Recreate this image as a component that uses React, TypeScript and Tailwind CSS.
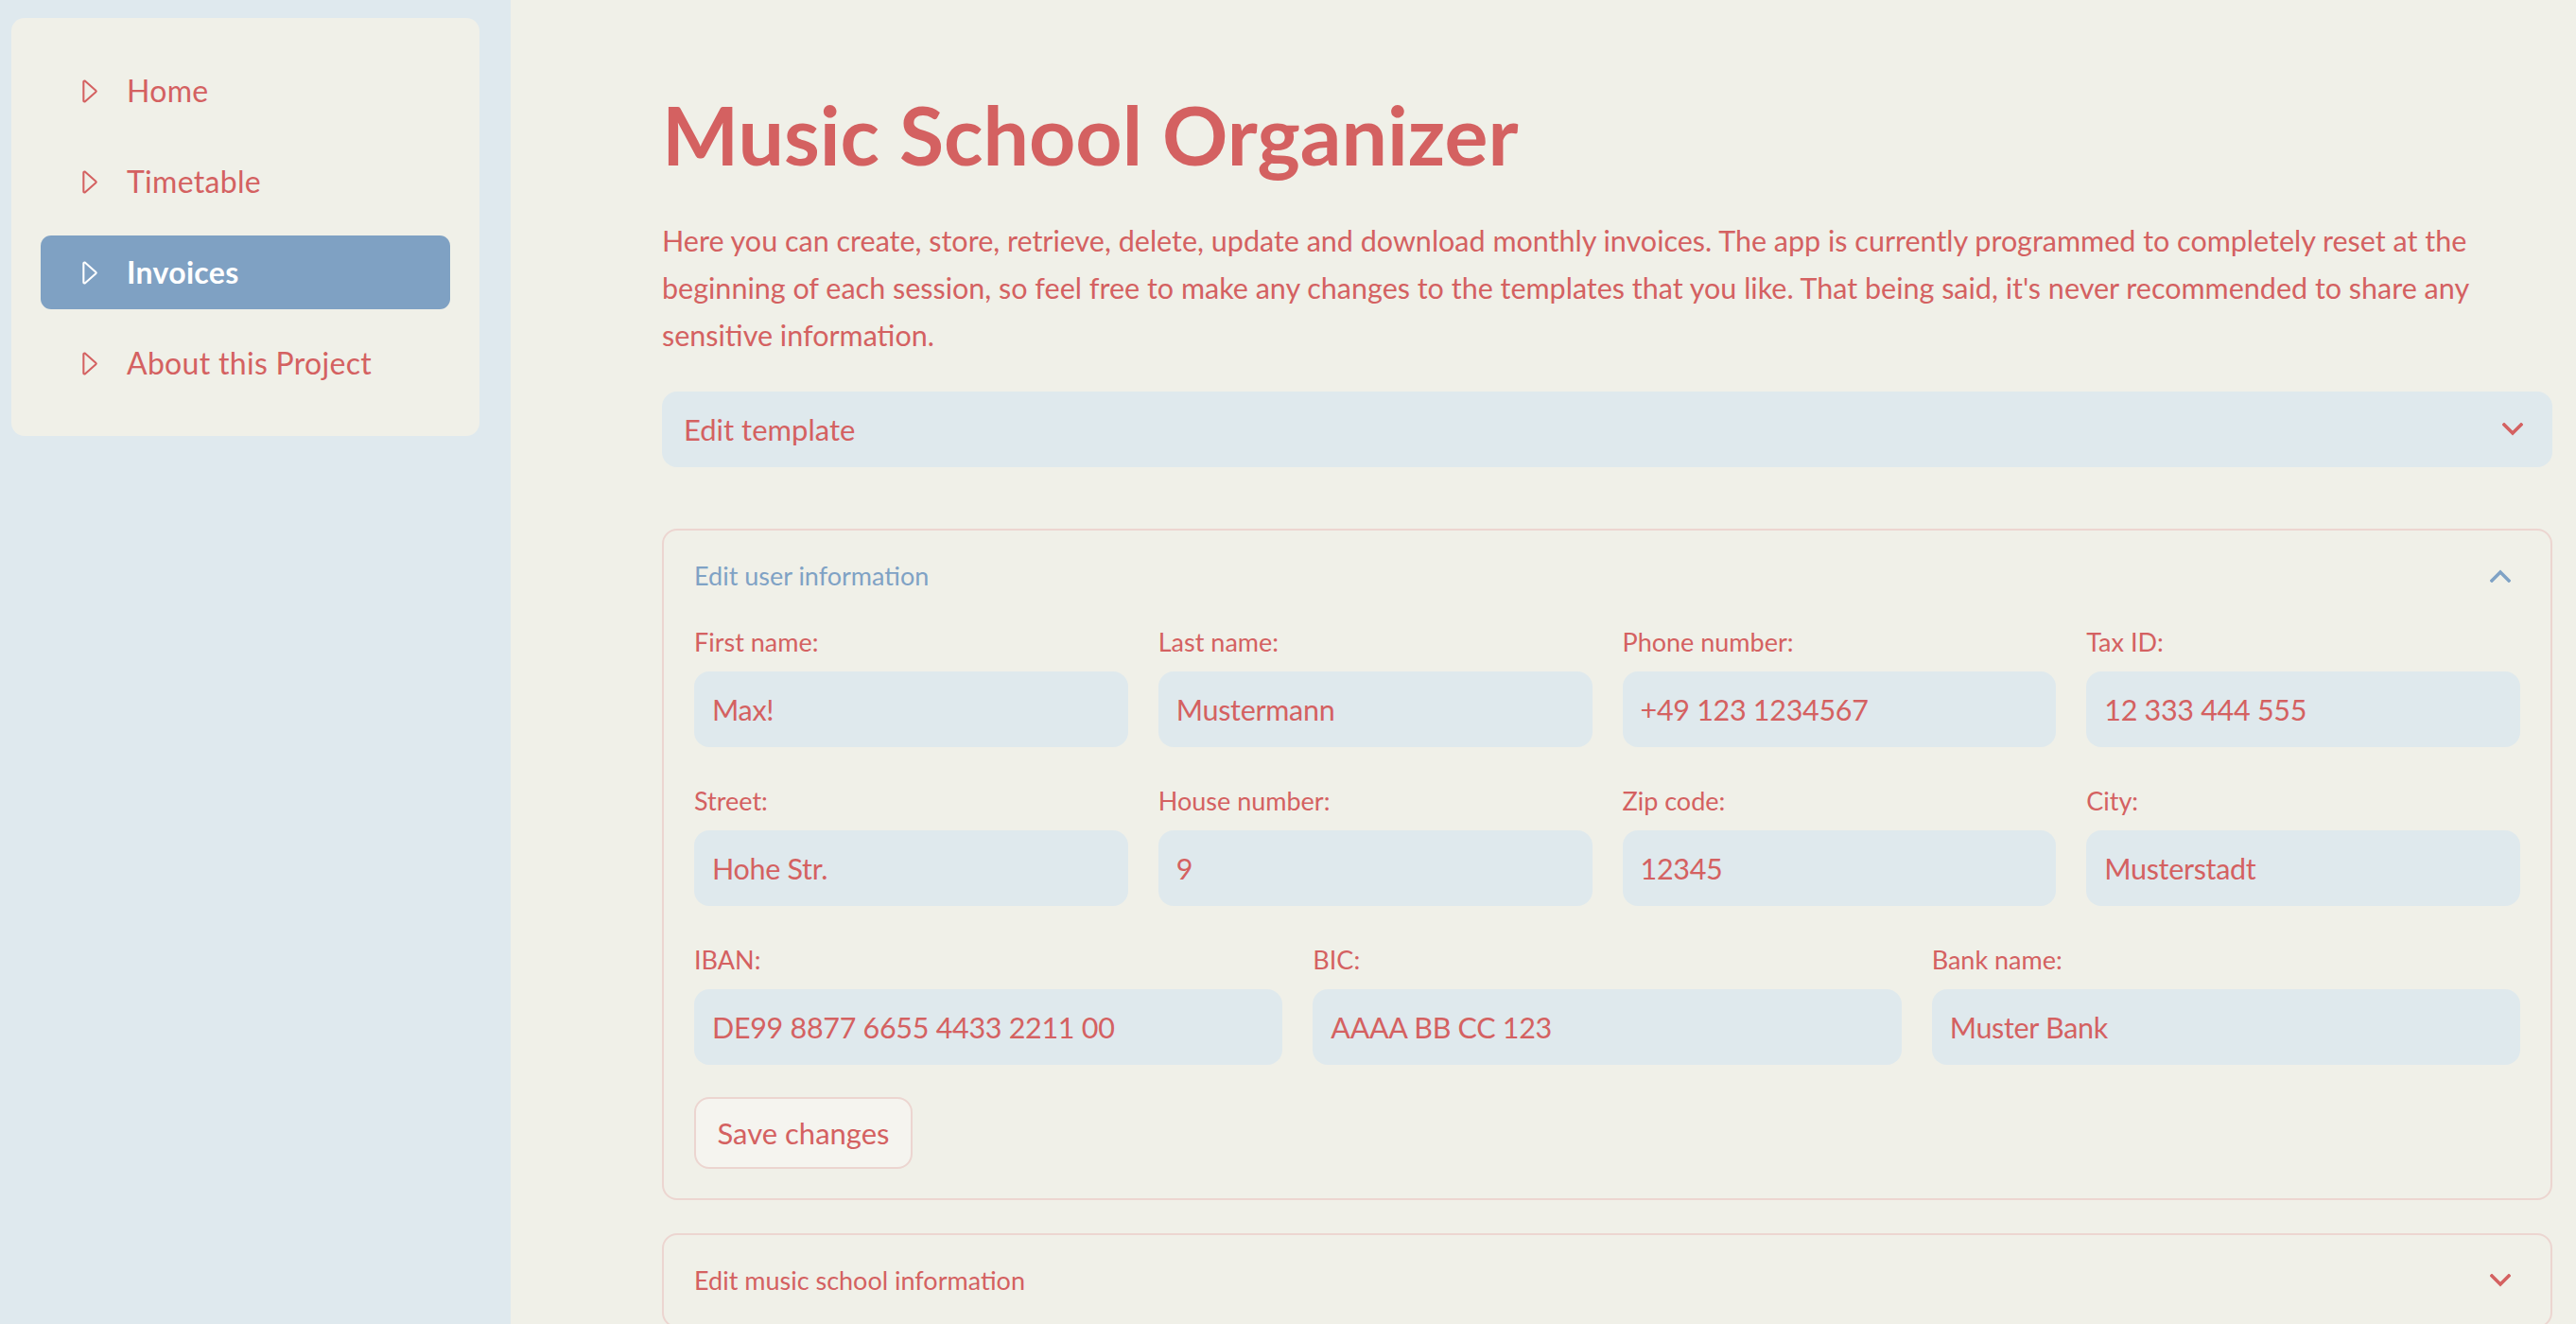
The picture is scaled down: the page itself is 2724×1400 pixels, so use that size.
import { useState } from 'react';

const menu = ['Home', 'Timetable', 'Invoices', 'About this Project'];

const rows = [
  [
    { label: 'First name:', value: 'Max!' },
    { label: 'Last name:', value: 'Mustermann' },
    { label: 'Phone number:', value: '+49 123 1234567' },
    { label: 'Tax ID:', value: '12 333 444 555' },
  ],
  [
    { label: 'Street:', value: 'Hohe Str.' },
    { label: 'House number:', value: '9' },
    { label: 'Zip code:', value: '12345' },
    { label: 'City:', value: 'Musterstadt' },
  ],
  [
    { label: 'IBAN:', value: 'DE99 8877 6655 4433 2211 00' },
    { label: 'BIC:', value: 'AAAA BB CC 123' },
    { label: 'Bank name:', value: 'Muster Bank' },
  ],
];

function Caret({ className }: { className?: string }) {
  return (
    <svg className={className} width="33" height="33" viewBox="0 0 16 16" fill="currentColor">
      <path d="M6 12.796V3.204L11.481 8 6 12.796zm.659.753 5.48-4.796a1 1 0 0 0 0-1.506L6.66 2.451C6.011 1.885 5 2.345 5 3.204v9.592a1 1 0 0 0 1.659.753z" />
    </svg>
  );
}

function Chevron({ up, className }: { up?: boolean; className?: string }) {
  return (
    <svg className={className} width="22" height="14" viewBox="0 0 22 14" fill="none" stroke="currentColor" strokeWidth="3.5" strokeLinecap="square">
      {up ? <polyline points="2,12 11,3 20,12" /> : <polyline points="2,2 11,11 20,2" />}
    </svg>
  );
}

export default function App() {
  const [active, setActive] = useState('Invoices');

  return (
    <div className="flex h-[1400px] w-full overflow-hidden font-['Lato',sans-serif] text-[#d46161]">
      {/* Sidebar */}
      <aside className="w-[540px] shrink-0 bg-[#dfe9ee] pl-[12px] pt-[19px]">
        <nav className="flex w-[495px] flex-col gap-[18px] rounded-[14px] bg-[#f0f0e8] px-[31px] py-[38px]">
          {menu.map((item) => {
            const selected = item === active;
            return (
              <div
                key={item}
                onClick={() => setActive(item)}
                className={`flex h-[78px] cursor-pointer items-center gap-[24px] rounded-[11px] pl-[34px] ${
                  selected ? 'bg-[#7fa1c3] text-white' : 'text-[#d46161]'
                }`}
              >
                <Caret />
                <span className={`text-[32px] tracking-[0.3px] ${selected ? 'font-bold' : 'font-normal'}`}>{item}</span>
              </div>
            );
          })}
        </nav>
      </aside>

      {/* Main */}
      <main className="flex-1 bg-[#f0f0e8] pl-[160px] pr-[25px] pt-[99px]">
        <h1 className="text-[86px] font-bold leading-none">Music School Organizer</h1>
        <p className="mt-[44px] text-[30.5px] leading-[50px]">
          Here you can create, store, retrieve, delete, update and download monthly invoices. The app is currently
          programmed to completely reset at the beginning of each session, so feel free to make any changes to the
          templates that you like. That being said, it's never recommended to share any sensitive information.
        </p>

        {/* Template select */}
        <div className="mt-[35px] flex h-[80px] items-center justify-between rounded-[16px] bg-[#dfe9ed] pl-[23px] pr-[31px]">
          <span className="text-[31px]">Edit template</span>
          <Chevron />
        </div>

        {/* User information expander */}
        <section className="mt-[65px] rounded-[16px] border-2 border-[#ecd5d0]">
          <div className="flex h-[96px] items-center justify-between pl-[32px] pr-[42px]">
            <span className="text-[27px] text-[#7fa2c5]">Edit user information</span>
            <Chevron up className="text-[#7fa2c5]" />
          </div>
          <div className="flex flex-col gap-[35px] px-[32px] pb-[31px]">
            {rows.map((row, i) => (
              <div key={i} className={`grid gap-x-[32px] ${row.length === 4 ? 'grid-cols-4' : 'grid-cols-3'}`}>
                {row.map((f) => (
                  <div key={f.label} className="flex flex-col">
                    <label className="flex h-[44px] items-center text-[27px]">{f.label}</label>
                    <input
                      readOnly
                      defaultValue={f.value}
                      className="mt-[9px] h-[80px] w-full rounded-[16px] bg-[#dfe9ed] px-[19px] text-[30.5px] tracking-[-0.3px] text-[#d46161] outline-none"
                    />
                  </div>
                ))}
              </div>
            ))}
            <div>
              <button className="mt-[-1px] h-[76px] w-[231px] rounded-[16px] border-2 border-[#ecd5d0] bg-[#f5f4ef] text-[31px] text-[#d46161]">
                Save changes
              </button>
            </div>
          </div>
        </section>

        {/* Music school expander */}
        <section className="mt-[35px] rounded-[16px] border-2 border-[#ecd5d0]">
          <div className="flex h-[96px] items-center justify-between pl-[32px] pr-[42px]">
            <span className="text-[27px]">Edit music school information</span>
            <Chevron />
          </div>
        </section>
      </main>
    </div>
  );
}
